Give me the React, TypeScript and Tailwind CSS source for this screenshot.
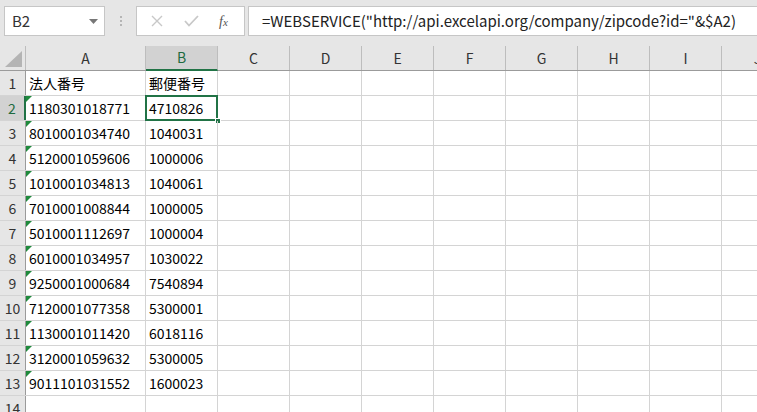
import React from 'react'

const cols = ['A', 'B', 'C', 'D', 'E', 'F', 'G', 'H', 'I', 'J']
const widths = ['w-[120px]', 'w-[72px]', 'w-[72px]', 'w-[72px]', 'w-[72px]', 'w-[72px]', 'w-[72px]', 'w-[72px]', 'w-[72px]', 'w-[72px]']

const data: [string, string][] = [
  ['法人番号', '郵便番号'],
  ['1180301018771', '4710826'],
  ['8010001034740', '1040031'],
  ['5120001059606', '1000006'],
  ['1010001034813', '1040061'],
  ['7010001008844', '1000005'],
  ['5010001112697', '1000004'],
  ['6010001034957', '1030022'],
  ['9250001000684', '7540894'],
  ['7120001077358', '5300001'],
  ['1130001011420', '6018116'],
  ['3120001059632', '5300005'],
  ['9011101031552', '1600023'],
  ['', ''],
]

const font = { fontFamily: '"Noto Sans CJK JP", "Noto Sans", sans-serif' }

export default function App() {
  return (
    <div className="w-[757px] h-[412px] overflow-hidden bg-white text-black" style={font}>
      {/* formula bar */}
      <div className="h-[46px] bg-[#e6e6e6] flex items-start pt-[6px]">
        <div className="ml-[4px] w-[101px] h-[30px] bg-white border border-[#c6c6c6] flex items-center justify-between pl-[7px] pr-[6px]">
          <span className="text-[15px] text-[#333]">B2</span>
          <svg width="9" height="5" viewBox="0 0 9 5"><path d="M0 0h9L4.5 5z" fill="#777" /></svg>
        </div>
        <div className="w-[31px] h-[30px] flex flex-col items-center justify-center gap-[2px]">
          <span className="w-[2px] h-[2px] bg-[#b5b5b5]" />
          <span className="w-[2px] h-[2px] bg-[#b5b5b5]" />
          <span className="w-[2px] h-[2px] bg-[#b5b5b5]" />
        </div>
        <div className="w-[109px] h-[30px] bg-white border border-[#c6c6c6] flex items-center pl-[14px]">
          <svg width="12" height="12" viewBox="0 0 12 12"><path d="M1 1l10 10M11 1L1 11" stroke="#c8c8c8" strokeWidth="1.4" /></svg>
          <svg className="ml-[21px]" width="15" height="12" viewBox="0 0 15 12"><path d="M1 6l4 4.5L14 1" stroke="#c8c8c8" strokeWidth="1.8" fill="none" /></svg>
          <span className="ml-[20px] text-[14px] italic text-[#555]" style={{ fontFamily: '"Liberation Serif", serif' }}>
            f<span className="text-[11px]">x</span>
          </span>
        </div>
        <div className="ml-[3px] flex-1 h-[30px] bg-white border border-r-0 border-[#c6c6c6] flex items-center pl-[13px] whitespace-nowrap">
          <span className="text-[15px] text-[#222]">=WEBSERVICE("http://api.excelapi.org/company/zipcode?id="&amp;$A2)</span>
        </div>
      </div>

      {/* column headers */}
      <div className="flex h-[25px] bg-[#e6e6e6] border-b border-[#9b9b9b]">
        <div className="w-[26px] shrink-0 border-r border-[#bdbdbd] flex items-end justify-end pr-[3px] pb-[3px]">
          <svg width="17" height="16" viewBox="0 0 17 16"><path d="M17 0v16H0z" fill="#b4b4b4" /></svg>
        </div>
        {cols.map((c, i) => (
          <div
            key={c}
            className={`${widths[i]} shrink-0 flex items-center justify-center text-[14px] border-r ${
              c === 'B'
                ? 'bg-[#d2d2d2] text-[#1e6b40] border-[#bdbdbd] border-b-2 border-b-[#217346] -mb-[1px]'
                : 'text-[#333] border-[#bdbdbd]'
            }`}
          >
            {c}
          </div>
        ))}
      </div>

      {/* rows */}
      {data.map(([a, b], r) => {
        const n = r + 1
        const sel = n === 2
        return (
          <div key={n} className="flex h-[25px] border-b border-[#d4d4d4]">
            <div
              className={`w-[26px] shrink-0 flex items-center justify-center text-[14px] ${
                sel ? 'bg-[#d2d2d2] text-[#1e6b40] border-r-2 border-[#217346]' : 'bg-[#e6e6e6] text-[#333] border-r border-[#9b9b9b]'
              }`}
            >
              {n}
            </div>
            <div className="relative w-[120px] shrink-0 border-r border-[#d4d4d4] flex items-center pl-[3px] text-[14px] whitespace-nowrap">
              {n > 1 && n < 14 && (
                <svg className="absolute left-0 top-0" width="6" height="6" viewBox="0 0 6 6"><path d="M0 0h6L0 6z" fill="#1e8a3c" /></svg>
              )}
              {a}
            </div>
            <div className="relative w-[72px] shrink-0 border-r border-[#d4d4d4] flex items-center pl-[3px] text-[14px] whitespace-nowrap">
              {b}
              {sel && (
                <>
                  <div className="absolute -left-[1px] -top-[1px] w-[73px] h-[26px] border-2 border-[#217346]" />
                  <div className="absolute -right-[4px] -bottom-[4px] w-[6px] h-[6px] bg-[#217346] border border-white" />
                </>
              )}
            </div>
            {cols.slice(2).map((c) => (
              <div key={c} className="w-[72px] shrink-0 border-r border-[#d4d4d4]" />
            ))}
          </div>
        )
      })}
    </div>
  )
}
